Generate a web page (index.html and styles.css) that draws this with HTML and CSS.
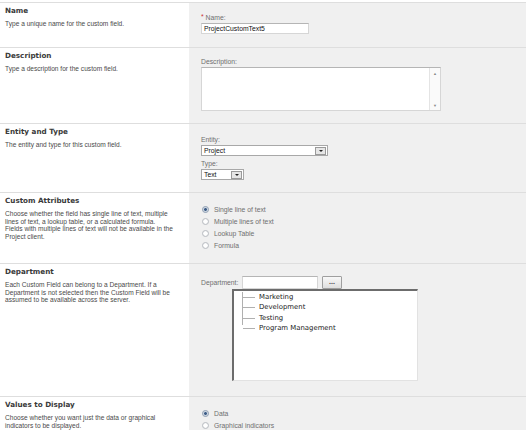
FILE: index.html
```html
<!DOCTYPE html>
<html lang="en">
<head>
  <meta charset="UTF-8">
  <title>New Custom Field</title>
  <link rel="stylesheet" href="styles.css">
</head>
<body>
  <div class="form">

    <div class="section s-name">
      <div class="info">
        <h3>Name</h3>
        <p>Type a unique name for the custom field.</p>
      </div>
      <div class="field">
        <div class="lbl"><span class="req">*</span> Name:</div>
        <div class="textbox name-box">ProjectCustomText5</div>
      </div>
    </div>

    <div class="section s-desc">
      <div class="info">
        <h3>Description</h3>
        <p>Type a description for the custom field.</p>
      </div>
      <div class="field">
        <div class="lbl">Description:</div>
        <div class="textarea">
          <div class="scroll"><span class="arr">&#9650;</span><span class="arr">&#9660;</span></div>
        </div>
      </div>
    </div>

    <div class="section s-entity">
      <div class="info">
        <h3>Entity and Type</h3>
        <p>The entity and type for this custom field.</p>
      </div>
      <div class="field">
        <div class="lbl">Entity:</div>
        <div class="select entity-sel"><span>Project</span><span class="drop"></span></div>
        <div class="lbl type-lbl">Type:</div>
        <div class="select type-sel"><span>Text</span><span class="drop"></span></div>
      </div>
    </div>

    <div class="section s-attr">
      <div class="info">
        <h3>Custom Attributes</h3>
        <p>Choose whether the field has single line of text, multiple lines of text, a lookup table, or a calculated formula.<br>Fields with multiple lines of text will not be available in the Project client.</p>
      </div>
      <div class="field">
        <div class="radio checked">Single line of text</div>
        <div class="radio">Multiple lines of text</div>
        <div class="radio">Lookup Table</div>
        <div class="radio">Formula</div>
      </div>
    </div>

    <div class="section s-dept">
      <div class="info">
        <h3>Department</h3>
        <p>Each Custom Field can belong to a Department. If a Department is not selected then the Custom Field will be assumed to be available across the server.</p>
      </div>
      <div class="field">
        <div class="dept-row">
          <span class="lbl">Department:</span>
          <span class="textbox dept-box"></span>
          <span class="btn">...</span>
        </div>
        <div class="tree">
          <ul>
            <li>Marketing</li>
            <li>Development</li>
            <li>Testing</li>
            <li>Program Management</li>
          </ul>
        </div>
      </div>
    </div>

    <div class="section s-values">
      <div class="info">
        <h3>Values to Display</h3>
        <p>Choose whether you want just the data or graphical indicators to be displayed.</p>
      </div>
      <div class="field">
        <div class="radio checked">Data</div>
        <div class="radio">Graphical indicators</div>
      </div>
    </div>

  </div>
</body>
</html>
```

FILE: styles.css
```css
* {
  box-sizing: border-box;
}
body {
  margin: 0;
  padding-top: 2px;
  background: #fff;
  font-family: "Liberation Sans", Arial, sans-serif;
  font-size: 6.6px;
  color: #4a4a4a;
  overflow: hidden;
}
.section {
  display: grid;
  grid-template-columns: 189px 1fr;
  border-top: 1px solid #dedede;
}
.s-name { height: 45px; }
.s-desc { height: 76px; }
.s-entity { height: 69px; }
.s-attr { height: 71px; }
.s-dept { height: 133px; }
.s-values { height: 34px; }

/* left column: heading + help text */
.info {
  padding: 4px 8px 0 5px;
}
.info h3 {
  margin: 0;
  font-family: "DejaVu Sans", sans-serif;
  font-size: 7.2px;
  line-height: 8px;
  font-weight: bold;
  color: #3a3a3a;
}
.info p {
  margin: 5px 0 0;
  line-height: 7.6px;
}

/* right column: the controls */
.field {
  background: #f0f0f0;
  padding: 10px 12px 0;
}
.s-entity .field { padding-top: 12px; }
.lbl {
  line-height: 8px;
  color: #6f6f6f;
  font-size: 6.8px;
}
.req {
  color: #c33;
  vertical-align: 1px;
}
.textbox {
  display: block;
  height: 11px;
  margin-top: 1px;
  background: #fff;
  border: 1px solid #d6d6d6;
  border-top-color: #b5b5b5;
  padding-left: 2px;
  font-size: 6.8px;
  line-height: 9px;
  color: #111;
}
.name-box { width: 108px; }

.textarea {
  position: relative;
  width: 240px;
  height: 44px;
  margin-top: 1px;
  background: #fff;
  border: 1px solid #d6d6d6;
  border-top-color: #b5b5b5;
}
.scroll {
  position: absolute;
  top: 0;
  right: 0;
  bottom: 0;
  width: 11px;
  display: flex;
  flex-direction: column;
  justify-content: space-between;
  align-items: center;
  padding: 3px 0 2px;
  background: #fafafa;
  border-left: 1px solid #e4e4e4;
}
.arr {
  font-size: 4px;
  color: #888;
  line-height: 5px;
}

.select {
  display: flex;
  justify-content: space-between;
  align-items: center;
  height: 11px;
  margin-top: 1px;
  background: #fff;
  border: 1px solid #a8a8a8;
  padding: 0 1px 0 2px;
  font-size: 6.8px;
  color: #111;
}
.entity-sel { width: 127px; }
.type-sel { width: 43px; }
.type-lbl { margin-top: 4px; }
.drop {
  width: 11px;
  height: 8px;
  background: #e6e6e6;
  border: 1px solid #9a9a9a;
  position: relative;
}
.drop::after {
  content: "";
  position: absolute;
  left: 2.5px;
  top: 2px;
  border-left: 2.5px solid transparent;
  border-right: 2.5px solid transparent;
  border-top: 2.5px solid #222;
}

.radio {
  display: flex;
  align-items: center;
  height: 12px;
  color: #6f6f6f;
  font-size: 6.8px;
}
.radio::before {
  content: "";
  width: 7px;
  height: 7px;
  margin: 0 5px 0 1px;
  border-radius: 50%;
  border: 1px solid #b9bdc2;
  background: radial-gradient(circle, #fff 40%, #e4e6e8);
  box-sizing: border-box;
}
.radio.checked::before {
  background: radial-gradient(circle, #3d5c86 30%, #a9b9cc 45%, #eef1f4 70%);
  border-color: #8b9bb0;
}

.dept-row {
  display: flex;
  align-items: center;
  margin-top: 2px;
  height: 13px;
}
.dept-row .lbl {
  width: 41px;
}
.dept-box {
  width: 76px;
  height: 13px;
  margin: 0;
}
.btn {
  width: 20px;
  height: 13px;
  margin-left: 4px;
  border: 1px solid #9f9f9f;
  border-radius: 1px;
  background: linear-gradient(#f8f8f8, #dedede);
  font-size: 7px;
  font-weight: bold;
  line-height: 9px;
  text-align: center;
  color: #444;
}
.tree {
  width: 186px;
  height: 92px;
  margin-left: 31px;
  background: #fff;
  border-top: 2px solid #6c6c6c;
  border-left: 2px solid #6c6c6c;
  border-right: 1px solid #e2e2e2;
  border-bottom: 1px solid #e2e2e2;
  padding: 1px 0 0 8px;
}
.tree ul {
  list-style: none;
  margin: 0;
  padding: 0;
  width: 120px;
  border-left: 1px solid #b0b0b0;
  height: 33px;
}
.tree li {
  position: relative;
  padding-left: 16px;
  height: 10.4px;
  line-height: 10px;
  font-family: "DejaVu Sans", sans-serif;
  font-size: 6.9px;
  color: #222;
}
.tree li::before {
  content: "";
  position: absolute;
  left: 0;
  top: 5px;
  width: 12px;
  border-top: 1px solid #b0b0b0;
}
```
